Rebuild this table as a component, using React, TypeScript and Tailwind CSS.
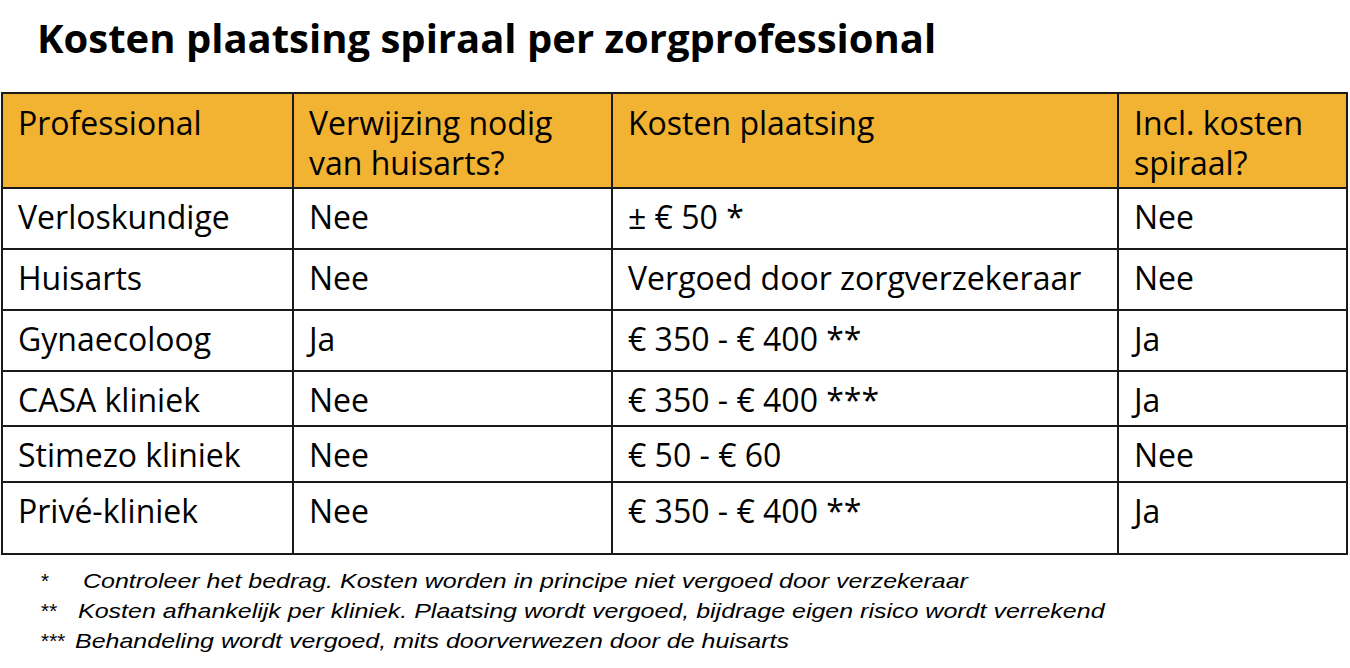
import React from "react";

const rows: { h: string; cells: string[] }[] = [
  { h: "h-[61px]", cells: ["Verloskundige", "Nee", "± € 50 *", "Nee"] },
  { h: "h-[61px]", cells: ["Huisarts", "Nee", "Vergoed door zorgverzekeraar", "Nee"] },
  { h: "h-[61px]", cells: ["Gynaecoloog", "Ja", "€ 350 - € 400 **", "Ja"] },
  { h: "h-[55px]", cells: ["CASA kliniek", "Nee", "€ 350 - € 400 ***", "Ja"] },
  { h: "h-[56px]", cells: ["Stimezo kliniek", "Nee", "€ 50 - € 60", "Nee"] },
  { h: "h-[72px]", cells: ["Privé-kliniek", "Nee", "€ 350 - € 400 **", "Ja"] },
];

const headers = [
  ["Professional"],
  ["Verwijzing nodig", "van huisarts?"],
  ["Kosten plaatsing"],
  ["Incl. kosten", "spiraal?"],
];

export default function App() {
  return (
    <div className="w-[1350px] h-[668px] bg-white text-black overflow-hidden">
      <h1
        className="pl-[37px] pt-[10px] h-[66px] text-[40px] leading-[56px] font-bold text-black"
        style={{ fontFamily: '"Open Sans", sans-serif' }}
      >
        Kosten plaatsing spiraal per zorgprofessional
      </h1>
      <div
        className="ml-[1px] mt-[26px] w-[1347px] grid grid-cols-[291px_319px_506px_229px] border-l-2 border-t-2 border-[#1a1a1a] text-[32px] leading-[40px] text-black"
        style={{ fontFamily: '"Open Sans", sans-serif' }}
      >
        {headers.map((lines, i) => (
          <div
            key={i}
            className="h-[95px] bg-[#f2b232] border-r-2 border-b-2 border-[#1a1a1a] pl-[15px] pt-[9px]"
          >
            {lines.map((l, j) => (
              <div key={j} className="whitespace-nowrap">
                {l}
              </div>
            ))}
          </div>
        ))}
        {rows.map((r, ri) =>
          r.cells.map((c, ci) => (
            <div
              key={ri + "-" + ci}
              className={`${r.h} border-r-2 border-b-2 border-[#1a1a1a] pl-[15px] pt-[8px] whitespace-nowrap`}
            >
              {c}
            </div>
          ))
        )}
      </div>
      <div
        className="mt-[11px] pl-[40px] text-[21px] leading-[30px] italic text-black"
        style={{ fontFamily: '"Liberation Sans", Arial, sans-serif' }}
      >
        <div className="flex whitespace-nowrap">
          <span className="w-[43px] shrink-0">*</span>
          <span className="inline-block origin-left scale-x-[1.19]">
            Controleer het bedrag. Kosten worden in principe niet vergoed door verzekeraar
          </span>
        </div>
        <div className="flex whitespace-nowrap">
          <span className="w-[38px] shrink-0">**</span>
          <span className="inline-block origin-left scale-x-[1.19]">
            Kosten afhankelijk per kliniek. Plaatsing wordt vergoed, bijdrage eigen risico wordt verrekend
          </span>
        </div>
        <div className="flex whitespace-nowrap">
          <span className="w-[35px] shrink-0">***</span>
          <span className="inline-block origin-left scale-x-[1.19]">
            Behandeling wordt vergoed, mits doorverwezen door de huisarts
          </span>
        </div>
      </div>
    </div>
  );
}
